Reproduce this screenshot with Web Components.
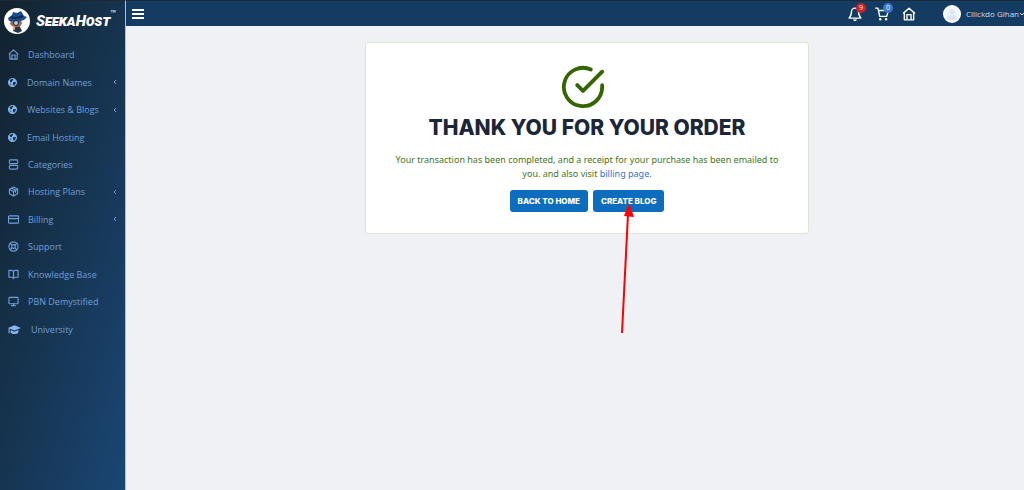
<!DOCTYPE html>
<html lang="en">
<head>
<meta charset="utf-8">
<meta name="viewport" content="width=device-width, initial-scale=1">
<title>SeekaHost - Order complete</title>
<style>
	body {
		margin: 0;
		background: #eff1f5;
		font-family: "Open Sans", "Noto Sans", sans-serif;
		font-size: 9px;
	}
</style>
</head>
<body>
<app-shell>
	<side-bar slot="side">
		<brand-logo slot="brand"></brand-logo>
		<nav-item icon="home">Dashboard</nav-item>
		<nav-item icon="globe" solid more>Domain Names</nav-item>
		<nav-item icon="globe" solid more>Websites &amp; Blogs</nav-item>
		<nav-item icon="globe" solid>Email Hosting</nav-item>
		<nav-item icon="server">Categories</nav-item>
		<nav-item icon="box" more>Hosting Plans</nav-item>
		<nav-item icon="card" more>Billing</nav-item>
		<nav-item icon="buoy">Support</nav-item>
		<nav-item icon="book">Knowledge Base</nav-item>
		<nav-item icon="monitor">PBN Demystified</nav-item>
		<nav-item icon="cap" wide>University</nav-item>
	</side-bar>
	<top-bar slot="top">
		<icon-button icon="bell" label="Notifications" count="9"></icon-button>
		<icon-button icon="cart" label="Cart" count="0" color="#3b76d2"></icon-button>
		<icon-button icon="home" label="Home"></icon-button>
		<user-menu slot="user">Cllickdo Gihan</user-menu>
	</top-bar>
	<order-card>
		<span slot="title">THANK YOU FOR YOUR ORDER</span>
		<action-button slot="actions">BACK TO HOME</action-button>
		<action-button slot="actions" pointed>CREATE BLOG</action-button>
	</order-card>
</app-shell>

<script>
// Stroked icons are drawn on a 24 unit grid, the solid ones are filled
const ICONS = {
	home: '<path d="M2.5 10.5 12 2l9.500 8.500M4 9.500V22h16V9.500M8.500 22v-9h7v9"/>',
	server: '<rect x="3" y="2" width="18" height="8" rx="2"/><rect x="3" y="14" width="18" height="8" rx="2"/>',
	box: '<path d="M21 7 12 2 3 7v10l9 5 9-5zM3 7l9 5 9-5M12 12v10M7.500 4.500l9 5v4"/>',
	card: '<rect x="1" y="4" width="22" height="16" rx="2"/><path d="M1 10h22"/>',
	buoy: '<circle cx="12" cy="12" r="10"/><circle cx="12" cy="12" r="4"/><path d="m5 5 4 4m6 6 4 4m0-14-4 4m-6 6-4 4"/>',
	book: '<path d="M2 3h6a4 4 0 0 1 4 4v14a3 3 0 0 0-3-3H2zM22 3h-6a4 4 0 0 0-4 4v14a3 3 0 0 1 3-3h7z"/>',
	monitor: '<rect x="2" y="3" width="20" height="14" rx="2"/><path d="M8 21h8M12 17v4"/>',
	bell: '<path d="M18 8A6 6 0 0 0 6 8c0 7-3 9-4 11h20c-1-2-4-4-4-11M13.700 22a2 2 0 0 1-3.400 0"/>',
	cart: '<circle cx="9" cy="21" r="1"/><circle cx="19" cy="21" r="1"/><path d="M1 2h4l3 14h12l3-10H6"/>',
	globe: '<circle cx="12" cy="12" r="11" fill="currentColor"/><path d="M5 5l7-3 2 3-3 2-1 4-5-2zM13 12l6-2 2 3-4 7-3-1zM5 14l4 2-1 4z" fill="#15293d" stroke="none"/>',
	cap: '<path d="M12 4 0 9l12 5 12-5zM5 13v5c3 3 11 3 14 0v-5l-7 3zM1 10h2v9H1z" fill="currentColor" stroke="none"/>',
};

function icon(name) {
	return `<svg class="icon" viewBox="0 0 24 24" fill="none" stroke="currentColor"
		stroke-width="2.4" stroke-linecap="round" stroke-linejoin="round" aria-hidden="true">${ICONS[name]}</svg>`;
}

class AppShell extends HTMLElement {
	constructor() {
		super();
		this.attachShadow({mode: 'open'}).innerHTML = `
			<slot name="side"></slot>
			<div class="page">
				<slot name="top"></slot>
				<main><slot></slot></main>
			</div>
			<style>
				:host {
					display: grid;
					grid-template-columns: 126px 1fr;
					min-height: 100vh;
				}
				.page {
					min-width: 0;
				}
				main {
					display: flex;
					justify-content: center;
					padding: 16px 0 16px 24px;
				}
			</style>`;
	}
}

class SideBar extends HTMLElement {
	constructor() {
		super();
		this.attachShadow({mode: 'open'}).innerHTML = `
			<slot name="brand"></slot>
			<nav><slot></slot></nav>
			<style>
				:host {
					display: block;
					box-sizing: border-box;
					border-top: 1px solid #1c2833;
					border-right: 1px solid #aebfd4;
					background: linear-gradient(105deg, #12222e 0%, #163450 50%, #1a4674 100%);
					color: #6f9fda;
				}
				/* eleven equal rows */
				nav {
					display: grid;
					grid-auto-rows: 1fr;
					min-height: 302px;
				}
			</style>`;
	}
}

class BrandLogo extends HTMLElement {
	constructor() {
		super();
		this.attachShadow({mode: 'open'}).innerHTML = `
			<svg viewBox="0 0 26 26" aria-hidden="true">
				<circle cx="13" cy="13" r="13" fill="#fff"/>
				<path d="M7 12h10l1 3-2 4H9l-3-3z" fill="#a5654a"/>
				<path d="M10 19h6l2 4-4 2-5-2z" fill="#263648"/>
				<path d="M4 10l4-3 1-3 4 1 4-2 3 5 3 1-3 3-7 2-8-1z" fill="#1d4d91"/>
				<path d="M7 9c4 2 8 1 12-1" stroke="#102b50" stroke-width="2" fill="none"/>
				<circle cx="12" cy="15" r="2.500" fill="#a8d5ed" stroke="#1b2733"/>
				<path d="M10 18v4" stroke="#d7a277" stroke-width="2"/>
			</svg>
			<span>SeekaHost</span><sup>™</sup>
			<style>
				:host {
					display: flex;
					align-items: center;
					height: 40px;
					padding-left: 4px;
					color: #fff;
				}
				svg {
					flex: none;
					width: 26px;
					height: 26px;
					margin-right: 6px;
				}
				span {
					font: italic 900 15px/20px "Roboto", sans-serif;
					font-variant-caps: small-caps;
				}
				sup {
					align-self: flex-start;
					margin-top: 8px;
					font-size: 7px;
					line-height: 8px;
				}
			</style>`;
	}
}

class NavItem extends HTMLElement {
	connectedCallback() {
		const more = this.hasAttribute('more');
		this.attachShadow({mode: 'open'}).innerHTML = `
			<a href="#">
				${icon(this.getAttribute('icon'))}
				<span><slot></slot></span>
				${more ? '<svg class="more" viewBox="0 0 4 6" aria-hidden="true"><path d="M3 1 1 3l2 2"/></svg>' : ''}
			</a>
			<style>
				:host {
					display: block;
				}
				a {
					display: flex;
					align-items: center;
					height: 100%;
					padding: 0 8px;
					color: inherit;
					text-decoration: none;
				}
				.icon {
					width: 11px;
					height: 11px;
					margin-right: 9px;
				}
				:host([solid]) .icon {
					width: 9px;
					height: 9px;
					margin-right: 10px;
					color: #86b6ee;
				}
				:host([wide]) .icon {
					width: 13px;
					height: 13px;
					margin-right: 10px;
					color: #86b6ee;
				}
				span {
					flex: 1;
					white-space: nowrap;
				}
				.more {
					width: 4px;
					height: 6px;
					fill: none;
					stroke: currentColor;
				}
			</style>`;
	}
}

class TopBar extends HTMLElement {
	constructor() {
		super();
		this.attachShadow({mode: 'open'}).innerHTML = `
			<button aria-label="Toggle menu"><i></i><i></i><i></i></button>
			<div class="tools"><slot></slot></div>
			<slot name="user"></slot>
			<style>
				:host {
					display: flex;
					align-items: center;
					box-sizing: border-box;
					height: 26px;
					padding-left: 6px;
					border-top: 1px solid #1c2833;
					background: #143b61;
					color: #fff;
				}
				button {
					display: grid;
					gap: 2px;
					width: 12px;
					padding: 0;
					border: 0;
					background: none;
				}
				i {
					height: 2px;
					background: #fff;
				}
				.tools {
					display: flex;
					gap: 13px;
					margin: 0 27px 0 auto;
				}
			</style>`;
	}
}

class IconButton extends HTMLElement {
	connectedCallback() {
		const count = this.getAttribute('count');
		this.attachShadow({mode: 'open'}).innerHTML = `
			<button aria-label="${this.getAttribute('label')}">
				${icon(this.getAttribute('icon'))}
				${count === null ? '' : `<b>${count}</b>`}
			</button>
			<style>
				:host {
					display: block;
				}
				button {
					position: relative;
					display: block;
					padding: 0;
					border: 0;
					background: none;
					color: #fff;
					font-family: inherit;
				}
				.icon {
					display: block;
					width: 14px;
					height: 14px;
				}
				b {
					position: absolute;
					top: -4px;
					right: -4px;
					width: 10px;
					border-radius: 5px;
					background: ${this.getAttribute('color') || '#cf1f25'};
					font-size: 7px;
					font-weight: 400;
					line-height: 10px;
					text-align: center;
				}
			</style>`;
	}
}

class UserMenu extends HTMLElement {
	constructor() {
		super();
		this.attachShadow({mode: 'open'}).innerHTML = `
			<button>
				<svg class="avatar" viewBox="0 0 18 18" aria-hidden="true">
					<circle cx="9" cy="9" r="9" fill="#fff"/>
					<circle cx="9" cy="9" r="7" fill="#f0f5fb"/>
					<circle cx="9" cy="7" r="2.500" fill="#dce5f0"/>
					<path d="M4 13c1-4 9-4 10 0-2 3-8 3-10 0z" fill="#dce5f0"/>
				</svg>
				<slot></slot>
				<svg class="down" viewBox="0 0 4 4" aria-hidden="true"><path d="m0 1 2 2 2-2" fill="none" stroke="currentColor"/></svg>
			</button>
			<style>
				:host {
					display: block;
				}
				button {
					display: flex;
					align-items: center;
					padding: 0;
					border: 0;
					background: none;
					color: #d3deea;
					font-family: inherit;
					font-size: 8px;
					white-space: nowrap;
				}
				.avatar {
					width: 18px;
					height: 18px;
					margin-right: 5px;
				}
				.down {
					width: 4px;
					height: 4px;
					margin-left: 1px;
				}
			</style>`;
	}
}

class OrderCard extends HTMLElement {
	constructor() {
		super();
		this.attachShadow({mode: 'open'}).innerHTML = `
			<svg viewBox="0 0 24 24" aria-hidden="true">
				<path d="M22 11.080V12a10 10 0 1 1-5.930-9.140M22 4 12 14.010l-3-3"/>
			</svg>
			<h1><slot name="title"></slot></h1>
			<p>Your transaction has been completed, and a receipt for your purchase has been emailed to you. and also visit <a href="#">billing page.</a></p>
			<div><slot name="actions"></slot></div>
			<style>
				:host {
					display: flex;
					flex-direction: column;
					align-items: center;
					box-sizing: border-box;
					width: 100%;
					max-width: 444px;
					padding: 21px 24px;
					border: 1px solid #d9e8cd;
					border-radius: 3px;
					background: #fff;
				}
				svg {
					width: 46px;
					height: 46px;
					margin-right: 8px;
					fill: none;
					stroke: #336600;
					stroke-width: 2;
					stroke-linecap: round;
					stroke-linejoin: round;
				}
				h1 {
					margin: 5px 0 12px;
					color: #1b2638;
					font: 800 21px/26px "Inter", sans-serif;
					text-align: center;
				}
				p {
					margin: 0 0 9px;
					color: #41761b;
					font-family: "Noto Sans", sans-serif;
					font-size: 9px;
					line-height: 14px;
					text-align: center;
				}
				a {
					color: #2d75d0;
					text-decoration: none;
				}
				div {
					display: flex;
					gap: 5px;
				}
			</style>`;
	}
}

class ActionButton extends HTMLElement {
	connectedCallback() {
		// "pointed" hangs the red arrow under the button
		const arrow = `
			<svg width="14" height="132" viewBox="0 0 14 132" aria-hidden="true">
				<path d="M8 12 2 131" stroke="#f00" stroke-width="2"/>
				<path d="M9 1 14 15 4 14z" fill="#f00"/>
			</svg>`;
		this.attachShadow({mode: 'open'}).innerHTML = `
			<button><slot></slot></button>
			${this.hasAttribute('pointed') ? arrow : ''}
			<style>
				:host {
					display: block;
					position: relative;
				}
				button {
					height: 22px;
					padding: 0 8px;
					border: 0;
					border-radius: 3px;
					background: #0c6cbe;
					color: #fff;
					font: 800 8px/22px "Inter", sans-serif;
					white-space: nowrap;
				}
				svg {
					position: absolute;
					top: 12px;
					left: 27px;
				}
			</style>`;
	}
}

customElements.define('app-shell', AppShell);
customElements.define('side-bar', SideBar);
customElements.define('brand-logo', BrandLogo);
customElements.define('nav-item', NavItem);
customElements.define('top-bar', TopBar);
customElements.define('icon-button', IconButton);
customElements.define('user-menu', UserMenu);
customElements.define('order-card', OrderCard);
customElements.define('action-button', ActionButton);
</script>
</body>
</html>
